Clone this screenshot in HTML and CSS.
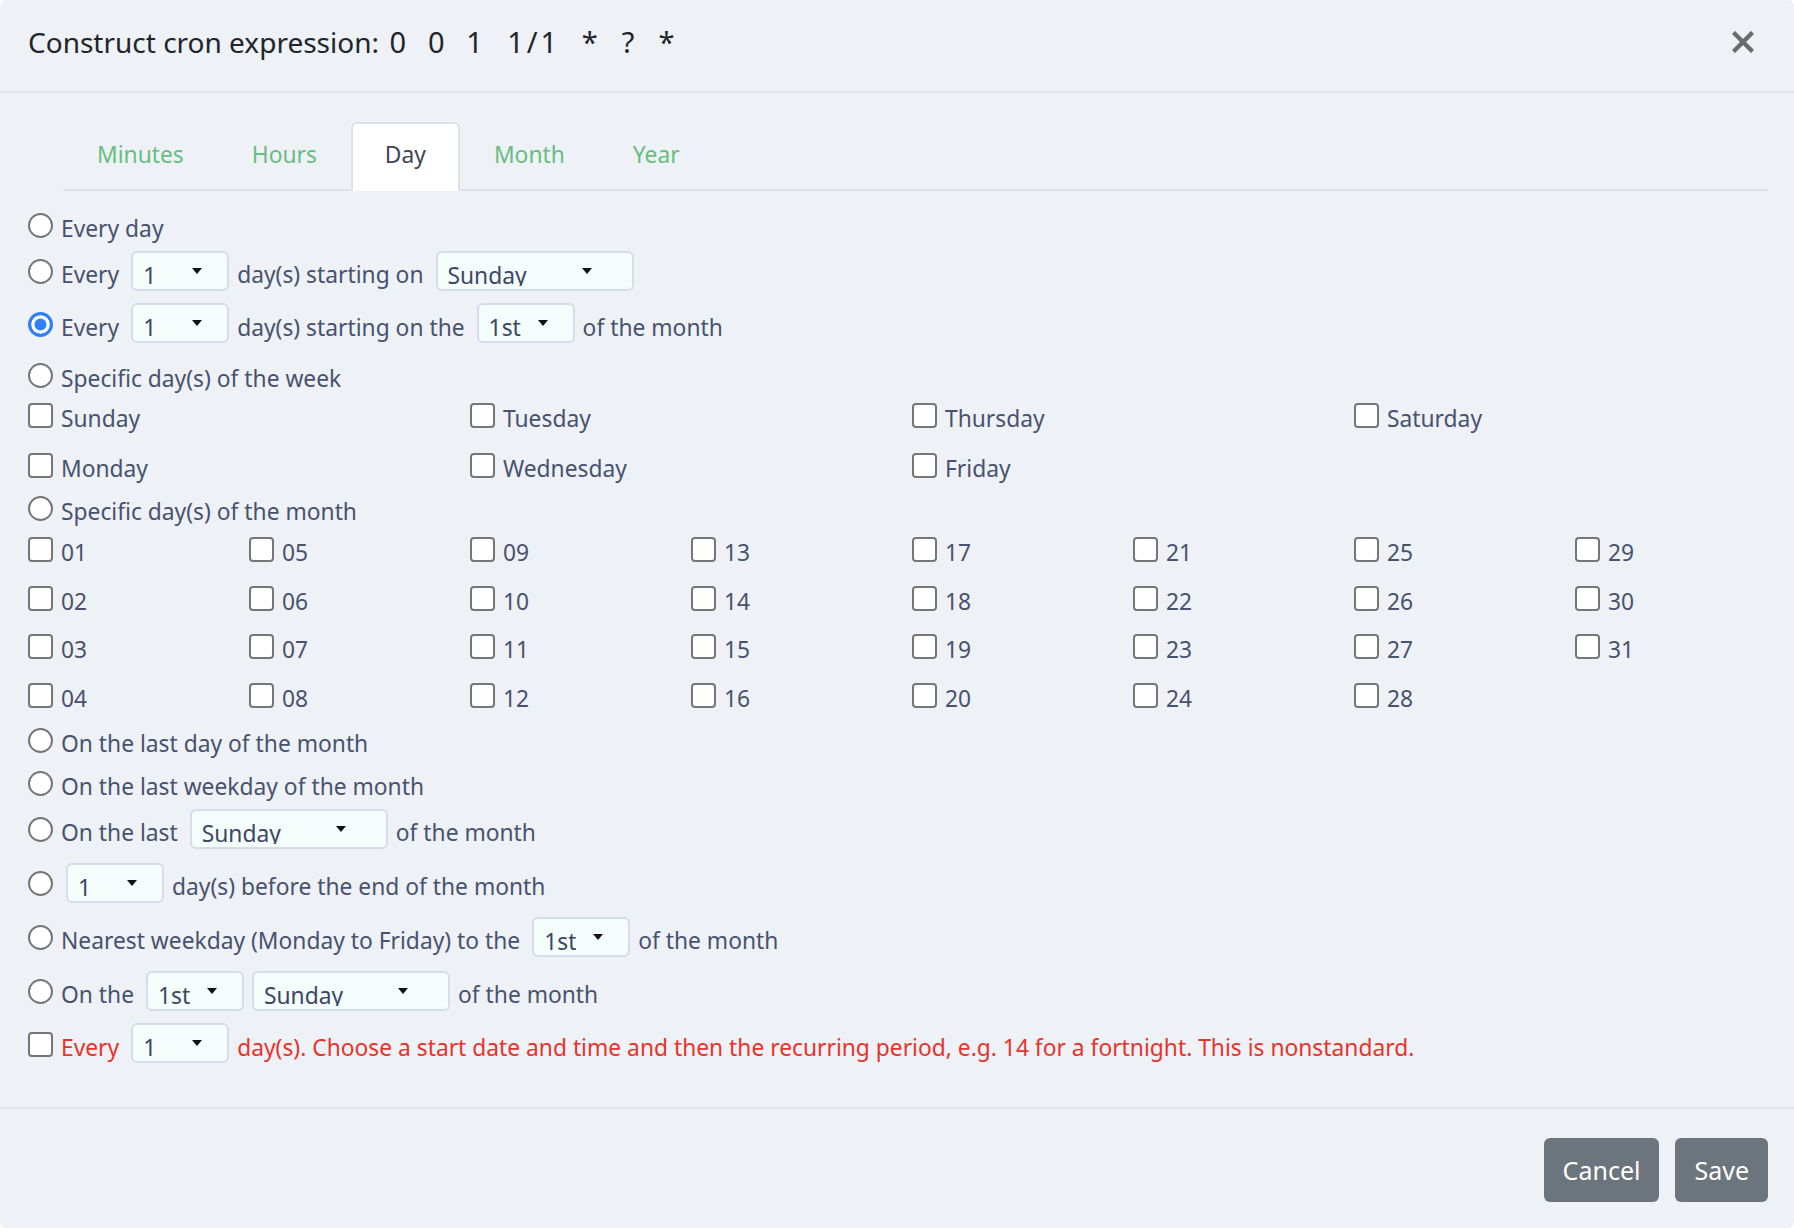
FILE: index.html
```html
<!DOCTYPE html>
<html lang="en">
<head>
<meta charset="utf-8">
<title>Construct cron expression</title>
<link rel="stylesheet" href="styles.css">
</head>
<body>
<div class="modal">
  <header class="modal-header">
    <h1 class="modal-title">Construct cron expression: <span class="expr"><span>0</span><span>0</span><span>1</span><span class="wide">1/1</span><span>*</span><span>?</span><span>*</span></span></h1>
    <button class="close" type="button" aria-label="Close">
      <svg width="22" height="22" viewBox="0 0 22 22"><path d="M3 3 L19 19 M19 3 L3 19" stroke="#6b6b6b" stroke-width="4.4" stroke-linecap="square" fill="none"/></svg>
    </button>
  </header>

  <div class="modal-body">
    <nav class="tabs">
      <a class="tab">Minutes</a>
      <a class="tab">Hours</a>
      <a class="tab active">Day</a>
      <a class="tab">Month</a>
      <a class="tab">Year</a>
    </nav>

    <div class="pane">
      <label class="row"><input type="radio" name="d">Every day</label>
      <label class="row mt-6"><input type="radio" name="d">Every<span class="sel sel-sm"><span class="sel-val">1</span><span class="caret"></span></span>day(s) starting on<span class="sel sel-lg"><span class="sel-val">Sunday</span><span class="caret"></span></span></label>
      <label class="row mt-13"><input type="radio" name="d" checked>Every<span class="sel sel-sm"><span class="sel-val">1</span><span class="caret"></span></span>day(s) starting on the<span class="sel sel-sm"><span class="sel-val">1st</span><span class="caret"></span></span>of the month</label>
      <label class="row mt-11"><input type="radio" name="d">Specific day(s) of the week</label>

      <div class="wgrid">
        <label class="row"><input type="checkbox">Sunday</label>
        <label class="row"><input type="checkbox">Tuesday</label>
        <label class="row"><input type="checkbox">Thursday</label>
        <label class="row"><input type="checkbox">Saturday</label>
        <label class="row"><input type="checkbox">Monday</label>
        <label class="row"><input type="checkbox">Wednesday</label>
        <label class="row"><input type="checkbox">Friday</label>
      </div>

      <label class="row mt-3"><input type="radio" name="d">Specific day(s) of the month</label>

      <div class="dgrid">
        <label class="row"><input type="checkbox">01</label>
        <label class="row"><input type="checkbox">05</label>
        <label class="row"><input type="checkbox">09</label>
        <label class="row"><input type="checkbox">13</label>
        <label class="row"><input type="checkbox">17</label>
        <label class="row"><input type="checkbox">21</label>
        <label class="row"><input type="checkbox">25</label>
        <label class="row"><input type="checkbox">29</label>
        <label class="row"><input type="checkbox">02</label>
        <label class="row"><input type="checkbox">06</label>
        <label class="row"><input type="checkbox">10</label>
        <label class="row"><input type="checkbox">14</label>
        <label class="row"><input type="checkbox">18</label>
        <label class="row"><input type="checkbox">22</label>
        <label class="row"><input type="checkbox">26</label>
        <label class="row"><input type="checkbox">30</label>
        <label class="row"><input type="checkbox">03</label>
        <label class="row"><input type="checkbox">07</label>
        <label class="row"><input type="checkbox">11</label>
        <label class="row"><input type="checkbox">15</label>
        <label class="row"><input type="checkbox">19</label>
        <label class="row"><input type="checkbox">23</label>
        <label class="row"><input type="checkbox">27</label>
        <label class="row"><input type="checkbox">31</label>
        <label class="row"><input type="checkbox">04</label>
        <label class="row"><input type="checkbox">08</label>
        <label class="row"><input type="checkbox">12</label>
        <label class="row"><input type="checkbox">16</label>
        <label class="row"><input type="checkbox">20</label>
        <label class="row"><input type="checkbox">24</label>
        <label class="row"><input type="checkbox">28</label>
      </div>

      <label class="row mt-4"><input type="radio" name="d">On the last day of the month</label>
      <label class="row mt-3"><input type="radio" name="d">On the last weekday of the month</label>
      <label class="row mt-6"><input type="radio" name="d">On the last<span class="sel sel-lg"><span class="sel-val">Sunday</span><span class="caret"></span></span>of the month</label>
      <label class="row mt-14"><input type="radio" name="d"><span class="sel sel-sm sel-first"><span class="sel-val">1</span><span class="caret"></span></span>day(s) before the end of the month</label>
      <label class="row mt-14"><input type="radio" name="d">Nearest weekday (Monday to Friday) to the<span class="sel sel-sm"><span class="sel-val">1st</span><span class="caret"></span></span>of the month</label>
      <label class="row mt-14"><input type="radio" name="d">On the<span class="sel sel-sm sel-pair"><span class="sel-val">1st</span><span class="caret"></span></span><span class="sel sel-lg sel-next"><span class="sel-val">Sunday</span><span class="caret"></span></span>of the month</label>
      <label class="row mt-13 warn"><input type="checkbox">Every<span class="sel sel-sm"><span class="sel-val">1</span><span class="caret"></span></span>day(s). Choose a start date and time and then the recurring period, e.g. 14 for a fortnight. This is nonstandard.</label>
    </div>
  </div>

  <footer class="modal-footer">
    <button class="btn" type="button">Cancel</button>
    <button class="btn" type="button">Save</button>
  </footer>
</div>
</body>
</html>
```

FILE: styles.css
```css
* { box-sizing: border-box; }

html, body {
  margin: 0;
  background: #ffffff;
}

body {
  font-family: "Noto Sans", "Open Sans", sans-serif;
  font-size: 22.8px;
  color: #48526e;
}

.modal {
  width: 1794px;
  height: 1228px;
  background: #eef1f6;
  border-radius: 6px;
  overflow: hidden;
  display: flex;
  flex-direction: column;
}

/* header */
.modal-header {
  height: 93px;
  flex: none;
  border-bottom: 2px solid #e3e6eb;
  display: flex;
  align-items: center;
  justify-content: space-between;
  padding: 0 40px 7px 28px;
}

.modal-title {
  margin: 0;
  font-size: 28px;
  font-weight: 400;
  color: #212529;
  white-space: pre;
}

.expr {
  font-size: 29px;
  line-height: 1;
}

.expr span {
  display: inline-block;
  width: 19.2px;
  margin-right: 19.2px;
  text-align: center;
}

.expr span:first-child {
  margin-left: 2px;
}

.expr .wide {
  width: 57.6px;
  letter-spacing: 3px;
  text-indent: 3px;
}

.close {
  border: none;
  background: none;
  padding: 0;
  width: 22px;
  height: 22px;
  display: flex;
}

/* body */
.modal-body {
  flex: 1;
}

.tabs {
  display: flex;
  margin: 29px 26px 0 63px;
  border-bottom: 2px solid #dee2e6;
}

.tab {
  display: flex;
  align-items: center;
  height: 69px;
  margin-bottom: -2px;
  padding: 0 32px 6px;
  border: 2px solid transparent;
  border-bottom: none;
  border-radius: 6px 6px 0 0;
  color: #68bd80;
}

.tab.active {
  background: #ffffff;
  border-color: #dee2e6;
  color: #3f4654;
}

.pane {
  padding: 17.5px 0 0 28px;
}

.row {
  height: 40px;
  display: flex;
  align-items: center;
  white-space: nowrap;
}

.row input {
  appearance: none;
  -webkit-appearance: none;
  flex: none;
  width: 25px;
  height: 25px;
  margin: 0 8px 6px 0;
  border: 2px solid #767676;
  background: #ffffff;
}

.row input[type="radio"] { border-radius: 50%; }
.row input[type="checkbox"] { border-radius: 4px; }

.row input[type="radio"]:checked {
  border: 3px solid #2f7ff6;
  background: #2f7ff6;
  box-shadow: inset 0 0 0 3.5px #ffffff;
}

.mt-3 { margin-top: 3.5px; }
.mt-4 { margin-top: 4.5px; }
.mt-6 { margin-top: 6px; }
.mt-11 { margin-top: 11px; }
.mt-13 { margin-top: 12.5px; }
.mt-14 { margin-top: 14px; }

.wgrid {
  display: grid;
  grid-template-columns: repeat(4, 442px);
  row-gap: 9.5px;
  margin-top: 0.5px;
}

.dgrid {
  display: grid;
  grid-template-columns: repeat(8, 221px);
  row-gap: 8.7px;
  margin-top: 1px;
}

/* select look-alikes */
.sel {
  display: flex;
  justify-content: space-between;
  align-items: flex-start;
  flex: none;
  height: 40px;
  margin: 0 8px 8px 12px;
  padding: 0 25px 0 10px;
  border: 2px solid #d3ddeb;
  border-radius: 6px;
  background: #f4fcfc;
  color: #3c4763;
}

.sel-sm { width: 98px; }
.sel-lg { width: 198px; padding-right: 40px; }
.sel-first { margin-left: 5px; }
.sel-pair { margin-right: 0; }
.sel-next { margin-left: 8px; }

.sel-val {
  display: block;
  height: 33px;
  padding-top: 11px;
  line-height: 23px;
  overflow: hidden;
}

.caret {
  width: 0;
  height: 0;
  margin-top: 15px;
  border-left: 5.5px solid transparent;
  border-right: 5.5px solid transparent;
  border-top: 6px solid #111111;
}

.warn { color: #e8332b; }

/* footer */
.modal-footer {
  flex: none;
  height: 121px;
  border-top: 2px solid #e3e6eb;
  display: flex;
  justify-content: flex-end;
  align-items: flex-start;
  gap: 16px;
  padding: 29px 26px 0 0;
}

.btn {
  height: 64px;
  padding: 0 19px;
  border: none;
  border-radius: 6px;
  background: #6c757d;
  color: #ffffff;
  font-family: "Noto Sans", "Open Sans", sans-serif;
  font-size: 25px;
}
```
